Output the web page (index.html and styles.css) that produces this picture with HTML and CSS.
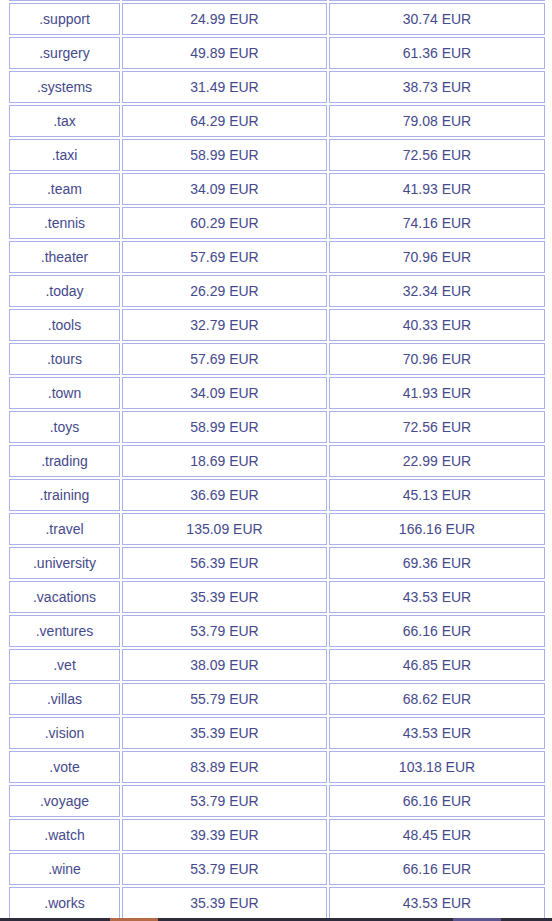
FILE: index.html
```html
<!DOCTYPE html>
<html>
<head>
<meta charset="utf-8">
<link rel="stylesheet" href="styles.css">
</head>
<body>
<table class="prices">
<tbody>
<tr class="spacer-row"><td></td><td></td><td></td></tr>
<tr><td>.support</td><td>24.99 EUR</td><td>30.74 EUR</td></tr>
<tr><td>.surgery</td><td>49.89 EUR</td><td>61.36 EUR</td></tr>
<tr><td>.systems</td><td>31.49 EUR</td><td>38.73 EUR</td></tr>
<tr><td>.tax</td><td>64.29 EUR</td><td>79.08 EUR</td></tr>
<tr><td>.taxi</td><td>58.99 EUR</td><td>72.56 EUR</td></tr>
<tr><td>.team</td><td>34.09 EUR</td><td>41.93 EUR</td></tr>
<tr><td>.tennis</td><td>60.29 EUR</td><td>74.16 EUR</td></tr>
<tr><td>.theater</td><td>57.69 EUR</td><td>70.96 EUR</td></tr>
<tr><td>.today</td><td>26.29 EUR</td><td>32.34 EUR</td></tr>
<tr><td>.tools</td><td>32.79 EUR</td><td>40.33 EUR</td></tr>
<tr><td>.tours</td><td>57.69 EUR</td><td>70.96 EUR</td></tr>
<tr><td>.town</td><td>34.09 EUR</td><td>41.93 EUR</td></tr>
<tr><td>.toys</td><td>58.99 EUR</td><td>72.56 EUR</td></tr>
<tr><td>.trading</td><td>18.69 EUR</td><td>22.99 EUR</td></tr>
<tr><td>.training</td><td>36.69 EUR</td><td>45.13 EUR</td></tr>
<tr><td>.travel</td><td>135.09 EUR</td><td>166.16 EUR</td></tr>
<tr><td>.university</td><td>56.39 EUR</td><td>69.36 EUR</td></tr>
<tr><td>.vacations</td><td>35.39 EUR</td><td>43.53 EUR</td></tr>
<tr><td>.ventures</td><td>53.79 EUR</td><td>66.16 EUR</td></tr>
<tr><td>.vet</td><td>38.09 EUR</td><td>46.85 EUR</td></tr>
<tr><td>.villas</td><td>55.79 EUR</td><td>68.62 EUR</td></tr>
<tr><td>.vision</td><td>35.39 EUR</td><td>43.53 EUR</td></tr>
<tr><td>.vote</td><td>83.89 EUR</td><td>103.18 EUR</td></tr>
<tr><td>.voyage</td><td>53.79 EUR</td><td>66.16 EUR</td></tr>
<tr><td>.watch</td><td>39.39 EUR</td><td>48.45 EUR</td></tr>
<tr><td>.wine</td><td>53.79 EUR</td><td>66.16 EUR</td></tr>
<tr><td>.works</td><td>35.39 EUR</td><td>43.53 EUR</td></tr>
</tbody>
</table>
<div class="bottombar">
  <span class="seg seg-orange"></span>
  <span class="seg seg-purple"></span>
</div>
</body>
</html>
```
FILE: styles.css
```css
html, body {
  margin: 0;
  padding: 0;
  background: #ffffff;
  overflow: hidden;
}
body {
  font-family: "Liberation Sans", Arial, sans-serif;
  font-size: 14px;
  color: #45498c;
}
.prices {
  margin: -33px 0 0 7px;
  width: 540px;
  border-collapse: separate;
  border-spacing: 2px;
  table-layout: fixed;
  empty-cells: show;
}
.prices td {
  border: 1px solid #aab0ee;
  height: 30px;
  padding: 0;
  text-align: center;
  vertical-align: middle;
  line-height: 16px;
}
.prices td:nth-child(1) { width: 109px; }
.prices td:nth-child(2) { width: 203px; }
.prices td:nth-child(3) { width: 214px; }
.bottombar {
  position: fixed;
  left: 0;
  right: 0;
  bottom: 0;
  height: 3px;
  background: #2e2c3c;
}
.seg {
  position: absolute;
  top: 0;
  bottom: 0;
}
.seg-orange {
  left: 110px;
  width: 48px;
  background: #b56a48;
}
.seg-purple {
  left: 453px;
  width: 48px;
  background: #5a5690;
}
```
